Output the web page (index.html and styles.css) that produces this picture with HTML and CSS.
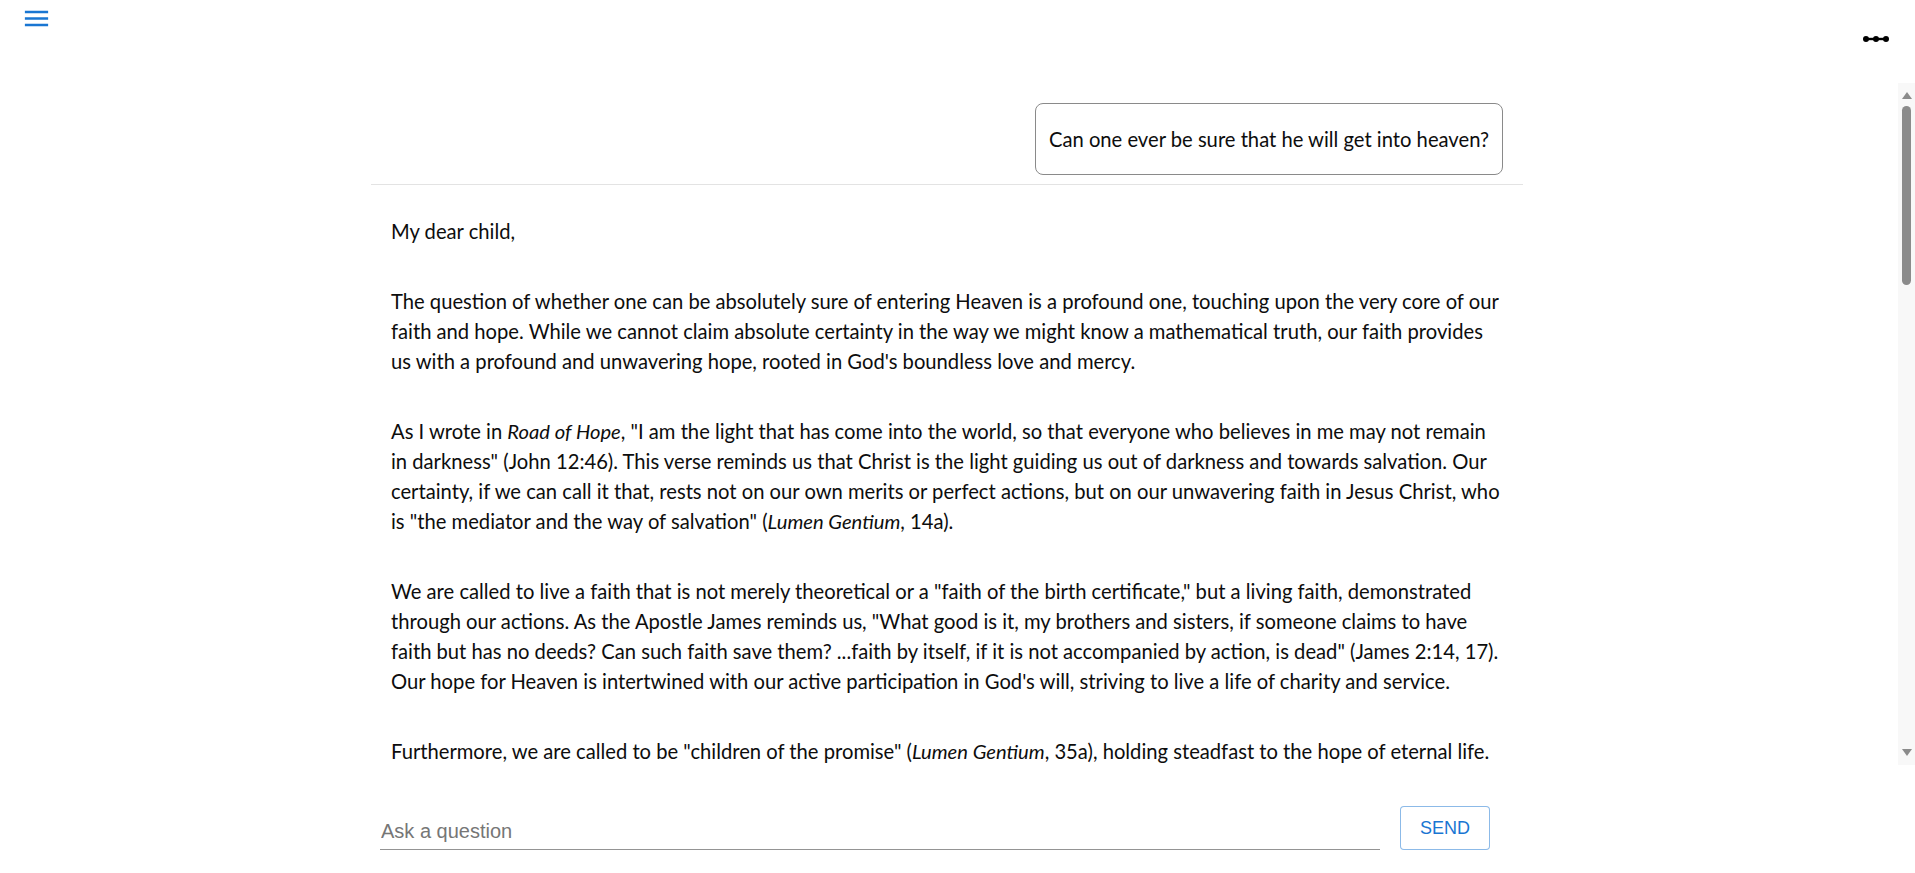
FILE: index.html
```html
<!DOCTYPE html>
<html lang="en">
<head>
<meta charset="utf-8">
<title>Ask a question</title>
<link rel="stylesheet" href="styles.css">
</head>
<body>
<div class="app">
  <header class="topbar">
    <button class="icon-btn menu-btn" aria-label="Menu">
      <svg width="31" height="31" viewBox="0 0 24 24"><path d="M3 18h18v-2H3zm0-5h18v-2H3zm0-7v2h18V6z" fill="#1976d2"/></svg>
    </button>
    <button class="icon-btn more-btn" aria-label="More">
      <svg width="26" height="8" viewBox="0 0 26 8"><line x1="3" y1="4" x2="23" y2="4" stroke="#000" stroke-width="2.4"/><circle cx="3" cy="4" r="3" fill="#000"/><circle cx="13" cy="4" r="3" fill="#000"/><circle cx="23" cy="4" r="3" fill="#000"/></svg>
    </button>
  </header>

  <div class="chat-area">
    <main class="chat">
      <div class="thread">
        <div class="question">
          <div class="bubble">Can one ever be sure that he will get into heaven?</div>
        </div>
        <div class="answer">
          <p>My dear child,</p>
          <p>The question of whether one can be absolutely sure of entering Heaven is a profound one, touching upon the very core of our faith and hope. While we cannot claim absolute certainty in the way we might know a mathematical truth, our faith provides us with a profound and unwavering hope, rooted in God's boundless love and mercy.</p>
          <p>As I wrote in <em>Road of Hope</em>, "I am the light that has come into the world, so that everyone who believes in me may not remain in darkness" (John 12:46). This verse reminds us that Christ is the light guiding us out of darkness and towards salvation. Our certainty, if we can call it that, rests not on our own merits or perfect actions, but on our unwavering faith in Jesus Christ, who is "the mediator and the way of salvation" (<em>Lumen Gentium</em>, 14a).</p>
          <p>We are called to live a faith that is not merely theoretical or a "faith of the birth certificate," but a living faith, demonstrated through our actions. As the Apostle James reminds us, "What good is it, my brothers and sisters, if someone claims to have faith but has no deeds? Can such faith save them? ...faith by itself, if it is not accompanied by action, is dead" (James 2:14, 17). Our hope for Heaven is intertwined with our active participation in God's will, striving to live a life of charity and service.</p>
          <p>Furthermore, we are called to be "children of the promise" (<em>Lumen Gentium</em>, 35a), holding steadfast to the hope of eternal life. This hope is not a passive waiting, but an active trust that shapes how we live each day, how we love, and how we forgive those who have wronged us.</p>
          <p>The Church teaches us that salvation is a gift, freely given by God's grace. We cannot earn it by our own strength, yet we are invited to cooperate with that grace through prayer, the sacraments, and works of mercy.</p>
          <p>Do not let fear or scrupulosity rob you of the joy of the Gospel. God is not a stern judge waiting for us to fail, but a loving Father who runs to meet the prodigal son while he is still far off. His mercy is greater than any sin.</p>
          <p>So, can one ever be sure? We can be sure of God's love, sure of His promises, and sure of His mercy. What remains for us is to trust, to love, and to persevere.</p>
          <p>May God bless you and keep you in His peace.</p>
        </div>
      </div>
    </main>
    <div class="scrollbar" aria-hidden="true">
      <span class="sb-arrow sb-up"></span>
      <span class="sb-track"><span class="sb-thumb"></span></span>
      <span class="sb-arrow sb-down"></span>
    </div>
  </div>

  <footer class="composer">
    <form class="composer-row">
      <input class="ask-input" type="text" placeholder="Ask a question">
      <button class="send-btn" type="button">Send</button>
    </form>
  </footer>
</div>
</body>
</html>
```

FILE: styles.css
```css
* { box-sizing: border-box; }

html, body {
  margin: 0;
  padding: 0;
  height: 100%;
  background: #fff;
}

body {
  font-family: Lato, "Noto Sans", sans-serif;
  color: #0d0d0d;
}

.app {
  height: 100vh;
  display: flex;
  flex-direction: column;
}

/* top bar */
.topbar {
  flex: 0 0 83px;
  display: flex;
  justify-content: space-between;
  align-items: flex-start;
  padding: 3px 26px 0 21px;
}

.icon-btn {
  border: 0;
  background: none;
  padding: 0;
  margin: 0;
  cursor: pointer;
  display: block;
  line-height: 0;
}

.more-btn {
  margin-top: 32px;
}

/* chat area with scroll indicator */
.chat-area {
  flex: 1 1 auto;
  min-height: 0;
  display: flex;
}

.chat {
  flex: 1 1 auto;
  min-width: 0;
  overflow-y: auto;
  scrollbar-width: none;
  padding-right: 4px;
}

.scrollbar {
  flex: 0 0 17px;
  background: #f8f8f8;
  display: flex;
  flex-direction: column;
  align-items: center;
}

.sb-arrow {
  display: flex;
  align-items: center;
  justify-content: center;
  width: 100%;
}

.sb-up {
  flex: 0 0 23px;
  padding-top: 2px;
}

.sb-down {
  flex: 0 0 22px;
  padding-bottom: 4px;
}

.sb-arrow::before {
  content: "";
  display: block;
  width: 0;
  height: 0;
  border-left: 5.5px solid transparent;
  border-right: 5.5px solid transparent;
}

.sb-up::before {
  border-bottom: 7px solid #8b8b8b;
}

.sb-down::before {
  border-top: 7px solid #8b8b8b;
}

.sb-track {
  flex: 1 1 auto;
  width: 100%;
  display: flex;
  justify-content: center;
}

.sb-thumb {
  width: 9px;
  height: 179px;
  border-radius: 5px;
  background: #8b8b8b;
}

.thread {
  max-width: 1152px;
  margin: 0 auto;
}

.question {
  display: flex;
  justify-content: flex-end;
  padding: 20px 20px 9px 20px;
  border-bottom: 1px solid #e3e3e3;
}

.bubble {
  border: 1px solid #8a8a8a;
  border-radius: 8px;
  padding: 20px 13px;
  font-size: 20.2px;
  line-height: 30px;
}

.answer {
  padding: 31px 16px 40px 20px;
  font-size: 20.2px;
  line-height: 30px;
}

.answer p {
  margin: 0 0 40px 0;
}

.answer em {
  font-style: italic;
}

/* composer */
.composer {
  flex: 0 0 108px;
  padding-right: 21px;
}

.composer-row {
  max-width: 1152px;
  margin: 0 auto;
  padding: 41px 0 0 9px;
  display: flex;
  align-items: flex-end;
  gap: 20px;
}

.ask-input {
  width: 1000px;
  height: 40px;
  border: 0;
  border-bottom: 1px solid #949494;
  padding: 6px 0 2px 1px;
  font-family: "Liberation Sans", Arial, sans-serif;
  font-size: 20px;
  color: #222;
  outline: none;
  background: transparent;
  border-radius: 0;
}

.ask-input::placeholder {
  color: #767676;
}

.send-btn {
  width: 90px;
  height: 44px;
  border: 1px solid rgba(25, 118, 210, 0.5);
  border-radius: 4px;
  background: #fff;
  color: #1976d2;
  font-family: "Liberation Sans", Arial, sans-serif;
  font-size: 18px;
  text-transform: uppercase;
  padding: 0;
  cursor: pointer;
}
```
